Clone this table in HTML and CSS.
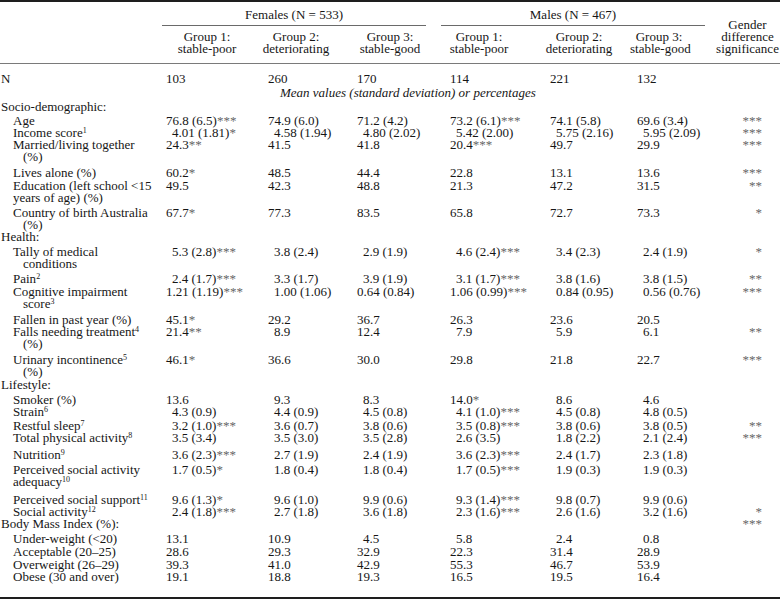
FILE: index.html
```html
<!DOCTYPE html>
<html lang="en">
<head>
<meta charset="utf-8">
<title>Table</title>
<link rel="stylesheet" href="styles.css">
</head>
<body>
<div class="tbl">
  <div class="head">
    <div class="span span-f">Females (N = 533)</div>
    <div class="span span-m">Males (N = 467)</div>
    <div class="gh g1">Group 1:<br>stable-poor</div>
    <div class="gh g2">Group 2:<br>deteriorating</div>
    <div class="gh g3">Group 3:<br>stable-good</div>
    <div class="gh g4">Group 1:<br>stable-poor</div>
    <div class="gh g5">Group 2:<br>deteriorating</div>
    <div class="gh g6">Group 3:<br>stable-good</div>
    <div class="gender">Gender<br>difference<br>significance</div>
  </div>

  <div class="body">
    <div class="row p9"><div class="sec">N</div><div>103</div><div>260</div><div>170</div><div>114</div><div>221</div><div>132</div><div></div></div>
    <div class="row mrow"><div></div><div class="mean">Mean values (standard deviation) or percentages</div></div>

    <div class="row p2"><div class="sec">Socio-demographic:</div><div></div><div></div><div></div><div></div><div></div><div></div><div></div></div>
    <div class="row p2"><div class="lab">Age</div><div>76.8 (6.5)<span class="s">***</span></div><div>74.9 (6.0)</div><div>71.2 (4.2)</div><div>73.2 (6.1)<span class="s">***</span></div><div>74.1 (5.8)</div><div>69.6 (3.4)</div><div class="g s">***</div></div>
    <div class="row"><div class="lab">Income score<sup class="n">1</sup></div><div class="d">4.01 (1.81)<span class="s">*</span></div><div class="d">4.58 (1.94)</div><div class="d">4.80 (2.02)</div><div class="d">5.42 (2.00)</div><div class="d">5.75 (2.16)</div><div class="d">5.95 (2.09)</div><div class="g s">***</div></div>
    <div class="row"><div class="lab">Married/living together<br><span class="cont">(%)</span></div><div>24.3<span class="s">**</span></div><div>41.5</div><div>41.8</div><div>20.4<span class="s">***</span></div><div>49.7</div><div>29.9</div><div class="g s">***</div></div>
    <div class="row p4"><div class="lab">Lives alone (%)</div><div>60.2<span class="s">*</span></div><div>48.5</div><div>44.4</div><div>22.8</div><div>13.1</div><div>13.6</div><div class="g s">***</div></div>
    <div class="row p1"><div class="lab">Education (left school &lt;15<br>years of age) (%)</div><div>49.5</div><div>42.3</div><div>48.8</div><div>21.3</div><div>47.2</div><div>31.5</div><div class="g s">**</div></div>
    <div class="row p3"><div class="lab">Country of birth Australia<br><span class="cont">(%)</span></div><div>67.7<span class="s">*</span></div><div>77.3</div><div>83.5</div><div>65.8</div><div>72.7</div><div>73.3</div><div class="g s">*</div></div>

    <div class="row"><div class="sec">Health:</div><div></div><div></div><div></div><div></div><div></div><div></div><div></div></div>
    <div class="row p3"><div class="lab">Tally of medical<br><span class="cont">conditions</span></div><div class="d">5.3 (2.8)<span class="s">***</span></div><div class="d">3.8 (2.4)</div><div class="d">2.9 (1.9)</div><div class="d">4.6 (2.4)<span class="s">***</span></div><div class="d">3.4 (2.3)</div><div class="d">2.4 (1.9)</div><div class="g s">*</div></div>
    <div class="row p3"><div class="lab">Pain<sup class="n">2</sup></div><div class="d">2.4 (1.7)<span class="s">***</span></div><div class="d">3.3 (1.7)</div><div class="d">3.9 (1.9)</div><div class="d">3.1 (1.7)<span class="s">***</span></div><div class="d">3.8 (1.6)</div><div class="d">3.8 (1.5)</div><div class="g s">**</div></div>
    <div class="row p1"><div class="lab">Cognitive impairment<br><span class="cont">score<sup class="n">3</sup></span></div><div>1.21 (1.19)<span class="s">***</span></div><div class="d">1.00 (1.06)</div><div>0.64 (0.84)</div><div>1.06 (0.99)<span class="s">***</span></div><div class="d">0.84 (0.95)</div><div class="d">0.56 (0.76)</div><div class="g s">***</div></div>
    <div class="row p4"><div class="lab">Fallen in past year (%)</div><div>45.1<span class="s">*</span></div><div>29.2</div><div>36.7</div><div>26.3</div><div>23.6</div><div>20.5</div><div></div></div>
    <div class="row"><div class="lab">Falls needing treatment<sup class="n">4</sup><br><span class="cont">(%)</span></div><div>21.4<span class="s">**</span></div><div class="d">8.9</div><div>12.4</div><div class="d">7.9</div><div class="d">5.9</div><div class="d">6.1</div><div class="g s">**</div></div>
    <div class="row p4"><div class="lab">Urinary incontinence<sup class="n">5</sup><br><span class="cont">(%)</span></div><div>46.1<span class="s">*</span></div><div>36.6</div><div>30.0</div><div>29.8</div><div>21.8</div><div>22.7</div><div class="g s">***</div></div>

    <div class="row p1"><div class="sec">Lifestyle:</div><div></div><div></div><div></div><div></div><div></div><div></div><div></div></div>
    <div class="row p3"><div class="lab">Smoker (%)</div><div>13.6</div><div class="d">9.3</div><div class="d">8.3</div><div>14.0<span class="s">*</span></div><div class="d">8.6</div><div class="d">4.6</div><div></div></div>
    <div class="row"><div class="lab">Strain<sup class="n">6</sup></div><div class="d">4.3 (0.9)</div><div class="d">4.4 (0.9)</div><div class="d">4.5 (0.8)</div><div class="d">4.1 (1.0)<span class="s">***</span></div><div class="d">4.5 (0.8)</div><div class="d">4.8 (0.5)</div><div></div></div>
    <div class="row p2"><div class="lab">Restful sleep<sup class="n">7</sup></div><div class="d">3.2 (1.0)<span class="s">***</span></div><div class="d">3.6 (0.7)</div><div class="d">3.8 (0.6)</div><div class="d">3.5 (0.8)<span class="s">***</span></div><div class="d">3.8 (0.6)</div><div class="d">3.8 (0.5)</div><div class="g s">**</div></div>
    <div class="row"><div class="lab">Total physical activity<sup class="n">8</sup></div><div class="d">3.5 (3.4)</div><div class="d">3.5 (3.0)</div><div class="d">3.5 (2.8)</div><div class="d">2.6 (3.5)</div><div class="d">1.8 (2.2)</div><div class="d">2.1 (2.4)</div><div class="g s">***</div></div>
    <div class="row p5"><div class="lab">Nutrition<sup class="n">9</sup></div><div class="d">3.6 (2.3)<span class="s">***</span></div><div class="d">2.7 (1.9)</div><div class="d">2.4 (1.9)</div><div class="d">3.6 (2.3)<span class="s">***</span></div><div class="d">2.4 (1.7)</div><div class="d">2.3 (1.8)</div><div></div></div>
    <div class="row p3"><div class="lab">Perceived social activity<br>adequacy<sup class="n">10</sup></div><div class="d">1.7 (0.5)<span class="s">*</span></div><div class="d">1.8 (0.4)</div><div class="d">1.8 (0.4)</div><div class="d">1.7 (0.5)<span class="s">***</span></div><div class="d">1.9 (0.3)</div><div class="d">1.9 (0.3)</div><div></div></div>
    <div class="row p6"><div class="lab">Perceived social support<sup class="n">11</sup></div><div class="d">9.6 (1.3)<span class="s">*</span></div><div class="d">9.6 (1.0)</div><div class="d">9.9 (0.6)</div><div class="d">9.3 (1.4)<span class="s">***</span></div><div class="d">9.8 (0.7)</div><div class="d">9.9 (0.6)</div><div></div></div>
    <div class="row"><div class="lab">Social activity<sup class="n">12</sup></div><div class="d">2.4 (1.8)<span class="s">***</span></div><div class="d">2.7 (1.8)</div><div class="d">3.6 (1.8)</div><div class="d">2.3 (1.6)<span class="s">***</span></div><div class="d">2.6 (1.6)</div><div class="d">3.2 (1.6)</div><div class="g s">*</div></div>

    <div class="row"><div class="sec">Body Mass Index (%):</div><div></div><div></div><div></div><div></div><div></div><div></div><div class="g s">***</div></div>
    <div class="row p3"><div class="lab">Under-weight (&lt;20)</div><div>13.1</div><div>10.9</div><div class="d">4.5</div><div class="d">5.8</div><div class="d">2.4</div><div class="d">0.8</div><div></div></div>
    <div class="row p1"><div class="lab">Acceptable (20–25)</div><div>28.6</div><div>29.3</div><div>32.9</div><div>22.3</div><div>31.4</div><div>28.9</div><div></div></div>
    <div class="row p1"><div class="lab">Overweight (26–29)</div><div>39.3</div><div>41.0</div><div>42.9</div><div>55.3</div><div>46.7</div><div>53.9</div><div></div></div>
    <div class="row"><div class="lab">Obese (30 and over)</div><div>19.1</div><div>18.8</div><div>19.3</div><div>16.5</div><div>19.5</div><div>16.4</div><div></div></div>
  </div>
</div>
</body>
</html>
```

FILE: styles.css
```css
html, body {
  margin: 0;
  padding: 0;
  background: #ffffff;
}

body {
  color: #161616;
  font-family: "Liberation Serif", "Times New Roman", serif;
  font-size: 13px;
  line-height: 12px;
  width: 780px;
  height: 601px;
  overflow: hidden;
}

.tbl {
  width: 780px;
  border-top: 2px solid #1e1e1e;
  border-bottom: 2px solid #1e1e1e;
  padding-bottom: 14px;
}

.head,
.row {
  display: grid;
  grid-template-columns: 160px 100px 90px 90px 100px 90px 85px 65px;
}

.head {
  grid-template-rows: auto auto;
  border-bottom: 1px solid #7a7a7a;
}

.span {
  grid-row: 1;
  text-align: center;
  padding-top: 7px;
  padding-bottom: 4px;
  border-bottom: 1px solid #6a6a6a;
}

.span-f {
  grid-column: 2 / 5;
  margin: 0 14px 0 2px;
}

.span-m {
  grid-column: 5 / 8;
  margin: 0 10px 0 1px;
}

.gh {
  grid-row: 2;
  text-align: center;
  padding-top: 5px;
  padding-bottom: 8px;
  white-space: nowrap;
}

.g1 { grid-column: 2; padding-right: 6px; }
.g2 { grid-column: 3; padding-right: 18px; }
.g3 { grid-column: 4; padding-right: 10px; }
.g4 { grid-column: 5; padding-right: 22px; }
.g5 { grid-column: 6; padding-right: 12px; }
.g6 { grid-column: 7; padding-right: 27px; }

.gender {
  grid-column: 8;
  grid-row: 1 / 3;
  align-self: end;
  text-align: center;
  padding-bottom: 8px;
  white-space: nowrap;
}

.row > div {
  white-space: nowrap;
}

.row > :nth-child(2) { padding-left: 6px; }
.row > :nth-child(3) { padding-left: 8px; }
.row > :nth-child(4) { padding-left: 7px; }
.row > :nth-child(5) { padding-left: 10px; }
.row > :nth-child(6) { padding-left: 10px; }
.row > :nth-child(7) { padding-left: 7px; }

.row > .d { text-indent: 6px; }

.row > .g {
  text-align: right;
  padding-right: 18px;
}

.s {
  color: #666666;
}

.sec {
  padding-left: 1px;
}

.lab {
  padding-left: 13px;
}

.cont {
  padding-left: 10px;
}

sup.n {
  font-size: 8px;
  line-height: 0;
  vertical-align: 4px;
}

.mrow {
  margin-top: 2px;
}

.row > .mean {
  grid-column: 2 / 9;
  font-style: italic;
  padding-left: 120px;
}

.p1 { padding-top: 1px; }
.p2 { padding-top: 2px; }
.p3 { padding-top: 3px; }
.p4 { padding-top: 4px; }
.p5 { padding-top: 5px; }
.p6 { padding-top: 6px; }
.p9 { padding-top: 9px; }
```
